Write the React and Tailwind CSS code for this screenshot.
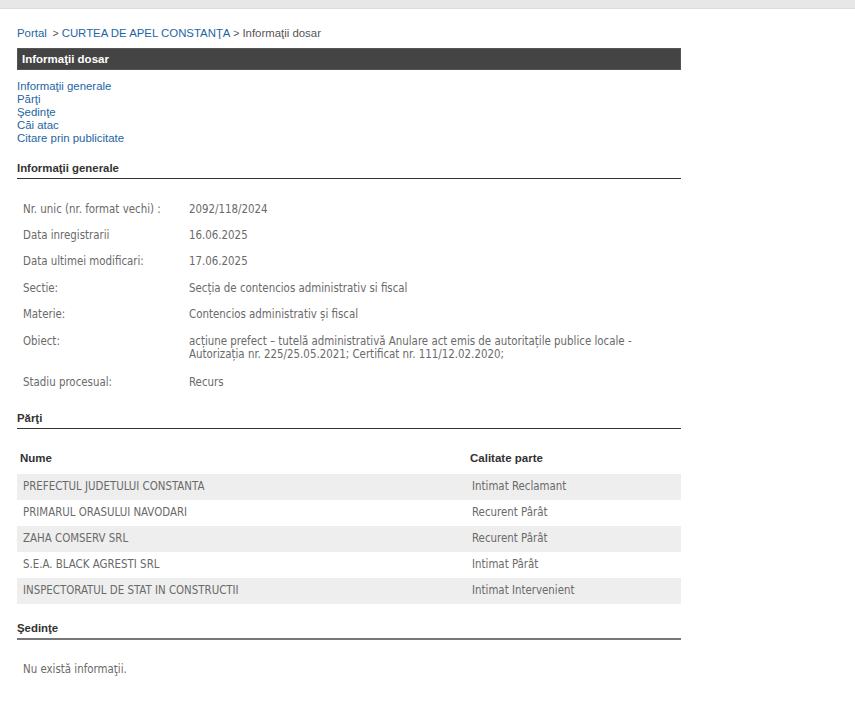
import React from "react";

const details = [
  ["Nr. unic (nr. format vechi) :", "2092/118/2024"],
  ["Data inregistrarii", "16.06.2025"],
  ["Data ultimei modificari:", "17.06.2025"],
  ["Sectie:", "Secția de contencios administrativ si fiscal"],
  ["Materie:", "Contencios administrativ și fiscal"],
  [
    "Obiect:",
    "acțiune prefect – tutelă administrativă Anulare act emis de autoritațile publice locale - Autorizația nr. 225/25.05.2021; Certificat nr. 111/12.02.2020;",
  ],
  ["Stadiu procesual:", "Recurs"],
];

const parti = [
  ["PREFECTUL JUDETULUI CONSTANTA", "Intimat Reclamant"],
  ["PRIMARUL ORASULUI NAVODARI", "Recurent Pârât"],
  ["ZAHA COMSERV SRL", "Recurent Pârât"],
  ["S.E.A. BLACK AGRESTI SRL", "Intimat Pârât"],
  ["INSPECTORATUL DE STAT IN CONSTRUCTII", "Intimat Intervenient"],
];

const SectionTitle = ({ children, className }) => (
  <div
    className={
      "text-[11.4px] leading-[14px] font-bold text-[#333] pb-[3px] border-b " +
      (className || "border-[#333]")
    }
  >
    {children}
  </div>
);

export default function App() {
  return (
    <div className="min-h-screen bg-white font-['Liberation_Sans',Arial,sans-serif]">
      <div className="h-[9px] bg-[#e7e7e7] border-b border-[#dcdcdc]" />
      <div className="ml-[17px] w-[664px]">
        {/* breadcrumb */}
        <div className="pt-[17px] text-[11.4px] leading-[14px] text-[#555]">
          <a href="#" className="text-[#1d65a3]">Portal</a>
          <span className="text-[10.5px]">&nbsp; &gt; </span>
          <a href="#" className="text-[#1d65a3]">CURTEA DE APEL CONSTANŢA</a>
          <span className="text-[10.5px]"> &gt; </span>
          <span>Informaţii dosar</span>
        </div>

        <div className="mt-[8px] h-[22px] bg-[#444] border border-[#555] flex items-center px-[4px] pt-[1px] text-white text-[11.5px] font-bold">
          Informaţii dosar
        </div>

        <div className="mt-[10px] flex flex-col text-[11.4px] leading-[13px] text-[#1d65a3]">
          <a href="#">Informaţii generale</a>
          <a href="#">Părţi</a>
          <a href="#">Şedinţe</a>
          <a href="#">Căi atac</a>
          <a href="#">Citare prin publicitate</a>
        </div>

        <SectionTitle className="mt-[16px] border-[#333]">Informaţii generale</SectionTitle>

        <div className="mt-[17px] font-['DejaVu_Sans_Condensed','DejaVu_Sans',sans-serif] text-[11.4px] leading-[13px] text-[#6a6a6a]">
          {details.map(([k, v]) => (
            <div
              key={k}
              className={"flex pt-[6.7px] " + (k === "Obiect:" ? "pb-[8.7px]" : "pb-[6.7px]")}
            >
              <div className="w-[172px] pl-[6px] shrink-0">{k}</div>
              <div className="flex-1 pr-[40px]">{v}</div>
            </div>
          ))}
        </div>

        <SectionTitle className="mt-[15px] border-[#333]">Părţi</SectionTitle>

        <div className="mt-[18px] font-['DejaVu_Sans_Condensed','DejaVu_Sans',sans-serif] text-[11.4px] text-[#6a6a6a]">
          <div className="flex h-[27px] pb-[3px] items-center text-[11.5px] font-bold text-[#333] font-['Liberation_Sans',Arial,sans-serif]">
            <div className="w-[449px] pl-[3px]">Nume</div>
            <div className="pl-[4px]">Calitate parte</div>
          </div>
          {parti.map(([n, c], i) => (
            <div
              key={n}
              className={
                "flex h-[26px] items-center " + (i % 2 === 0 ? "bg-[#eeeeee]" : "")
              }
            >
              <div className="w-[449px] pl-[6px]">{n}</div>
              <div className="pl-[6px]">{c}</div>
            </div>
          ))}
        </div>

        <SectionTitle className="mt-[17px] border-b-2 border-[#777]">Şedinţe</SectionTitle>

        <div className="mt-[22px] pl-[6px] font-['DejaVu_Sans_Condensed','DejaVu_Sans',sans-serif] text-[11.4px] leading-[14px] text-[#6a6a6a]">
          Nu există informaţii.
        </div>
      </div>
    </div>
  );
}
